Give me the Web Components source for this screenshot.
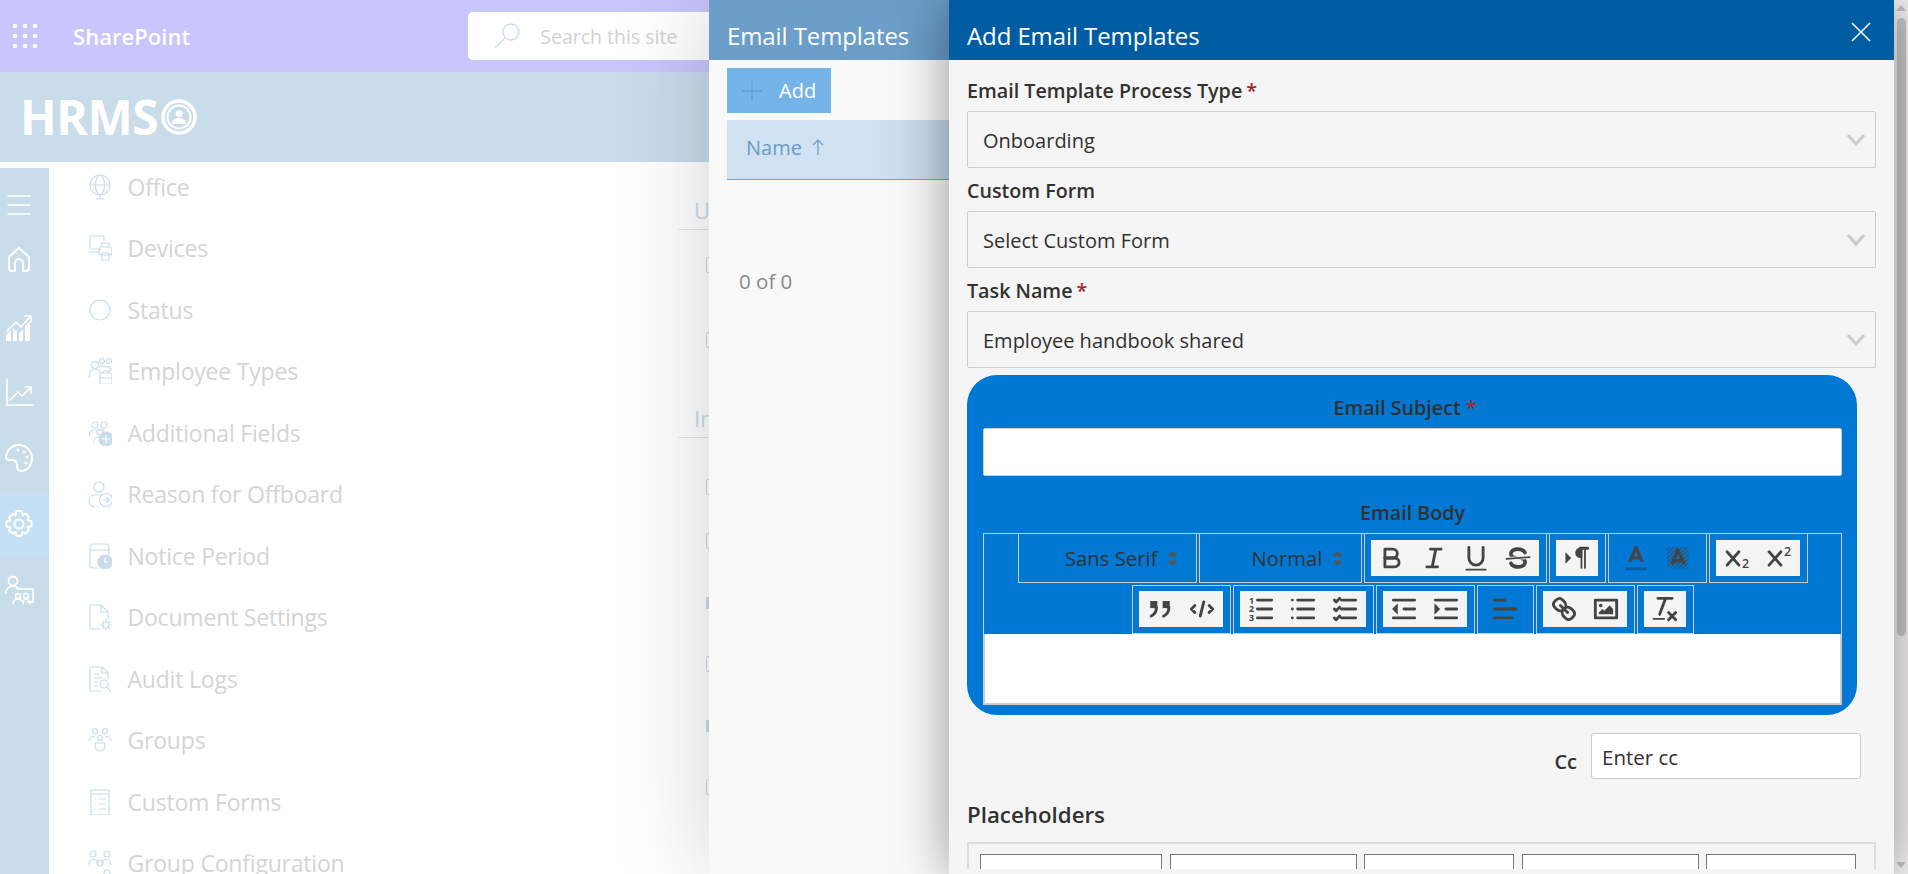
<!DOCTYPE html>
<html lang="en">
<head>
<meta charset="utf-8">
<title>Add Email Templates</title>
<style>
    html, body { margin: 0; height: 100%; overflow: hidden; background: #fff; }
    body { font-family: "Open Sans", "Liberation Sans", sans-serif; color: #333; }
</style>
</head>
<body>
<hrms-page></hrms-page>
<templates-panel>
    <add-template-panel>
        <form-select label="Email Template Process Type" value="Onboarding" required></form-select>
        <form-select label="Custom Form" value="Select Custom Form"></form-select>
        <form-select label="Task Name" value="Employee handbook shared" required></form-select>
        <email-box></email-box>
        <cc-row></cc-row>
        <placeholder-list></placeholder-list>
    </add-template-panel>
</templates-panel>

<script>
const line = 'fill="none" stroke="currentColor" stroke-linecap="round" stroke-linejoin="round"';

// left rail icons, 30 x 30
const railIcons = [
    `<path d="M4 6h22M4 15h22M4 24h22" ${line} stroke-width="1.4"/>`,
    `<path d="M5 13 15 4l10 9v11a3 3 0 0 1-3 3h-3V19a4 4 0 0 0-8 0v8H8a3 3 0 0 1-3-3z" ${line} stroke-width="2"/>`,
    `<path d="M3 18 12 9l5 5 9-10M21 3h6v6" ${line} stroke-width="1.6"/><path d="M2 28v-6l5-5v11zM9 28V15l4 4v9zM15 28v-8l4-3v11zM21 28V13l5-5v20z" fill="currentColor"/>`,
    `<path d="M3 2v26h26M6 23l8-8 4 4 9-9M21 10h6v6" ${line} stroke-width="1.7"/>`,
    `<path d="M15 2C7 2 2 8 2 15c1 3 3 2 6 2 4 0 5 2 5 5 0 3 0 6 4 6 7 0 11-6 11-13S22 2 15 2z" ${line} stroke-width="2"/><circle cx="14" cy="7" r="1.600" fill="currentColor"/><circle cx="20" cy="9" r="1.600" fill="currentColor"/><circle cx="23" cy="14" r="1.600" fill="currentColor"/><circle cx="22" cy="20" r="1.600" fill="currentColor"/>`,
    `<path d="M12.500 2h5l1 4 3-1.500 3.500 3.500-1.500 3 4 1v5l-4 1 1.500 3-3.500 3.500-3-1.500-1 4h-5l-1-4-3 1.500L5 21.500l1.500-3-4-1v-5l4-1L5 8.500 8.500 5l3 1.500z" ${line} stroke-width="2"/><circle cx="15" cy="15" r="4.500" ${line} stroke-width="2"/>`,
    `<circle cx="9" cy="6" r="4.500" ${line} stroke-width="1.800"/><path d="M2 18c0-4 3-7 7-7 3 0 4 1 6 3h14v13h-6M13 14h16" ${line} stroke-width="1.600"/><circle cx="14" cy="21" r="2.500" ${line} stroke-width="1.500"/><circle cx="22" cy="21" r="2.500" ${line} stroke-width="1.500"/><path d="M9 29c0-3 2-5 5-5s5 2 5 5c0-3 1-5 3-5s4 2 4 5" ${line} stroke-width="1.500"/>`
];
const railPads = ['8px 0 0', '0 0 14px', '0 0 6px', '0 0 7px', '0 0 5px', '0 0 3px', '0 0 2px'];

// settings menu, icons 24 x 26
const menuItems = [
    ['Office', `<circle cx="12" cy="11" r="10"/><ellipse cx="12" cy="11" rx="4.500" ry="10"/><path d="M2 11h20M12 21v4M8 25h8"/>`],
    ['Devices', `<path d="M13 14H4a2 2 0 0 1-2-2V3a2 2 0 0 1 2-2h10a2 2 0 0 1 2 2v3M1 17h11"/><rect x="11" y="12" width="13" height="8" rx="2"/><path d="M14 12V8h7v4M14 18h7v7h-7z"/>`],
    ['Status', `<circle cx="12" cy="13" r="10"/>`],
    ['Employee Types', `<circle cx="7" cy="7" r="3.500"/><circle cx="14" cy="3" r="2.500"/><circle cx="21" cy="3" r="2.500"/><path d="M1 20c0-5 2-9 6-9s5 2 5 4M11 9c2-1 5-1 7 0 2-1 5 0 5 4"/><rect x="12" y="15" width="12" height="11" rx="1"/><path d="M15 15v-2h6v2M12 20h12"/>`],
    ['Additional Fields', `<circle cx="7" cy="5" r="3"/><circle cx="16" cy="5" r="3"/><path d="M2 16c-2-3 1-6 4-6h11"/><circle cx="12" cy="12" r="3"/><path d="M6 22c0-3 2-5 5-5"/><circle cx="18" cy="19" r="7" fill="currentColor"/><path d="M18 15v8M14 19h8" stroke="#fff"/>`],
    ['Reason for Offboard', `<circle cx="11" cy="6" r="5"/><path d="M11 26H7c-3 0-6-2-6-6s3-6 6-6h7"/><circle cx="18" cy="19" r="6.500"/><path d="M15 19h6M18.500 16l3 3-3 3"/>`],
    ['Notice Period', `<path d="M11 25H5a3 3 0 0 1-3-3V4a3 3 0 0 1 3-3h13a3 3 0 0 1 3 3v8M2 7h19"/><circle cx="17" cy="19" r="7" fill="currentColor"/><path d="M17 15v4h3" stroke="#fff"/>`],
    ['Document Settings', `<path d="M12 25H2V1h11l7 7v7M13 1v7h7"/><circle cx="18" cy="21" r="3"/><path d="M18 15v2M18 25v2M12 21h2M22 21h2M14 17l1.500 1.500M20.500 23.500 22 25M14 25l1.500-1.500M20.500 18.500 22 17"/>`],
    ['Audit Logs', `<path d="M13 25H2V1h12l6 6v6M14 1v6h6M6 8h5M6 12h8M6 16h4M6 20h4"/><circle cx="16" cy="18" r="4"/><path d="M19 21l4 5"/>`],
    ['Groups', `<circle cx="7" cy="4" r="2.500"/><circle cx="17" cy="4" r="2.500"/><circle cx="12" cy="11" r="2.500"/><path d="M1 14c0-3 3-5 6-4M23 14c0-3-3-5-6-4M7 16h10v3a5 5 0 0 1-10 0z"/>`],
    ['Custom Forms', `<rect x="3" y="1" width="18" height="25"/><path d="M3 5h18M7 10h1M11 10h7M7 15h1M11 15h7M7 20h1M11 20h7"/>`],
    ['Group Configuration', `<circle cx="5" cy="4" r="3"/><circle cx="19" cy="4" r="3"/><circle cx="12" cy="13" r="3"/><circle cx="19" cy="23" r="3"/><path d="M1 15c0-4 1-6 4-6s4 2 6 4M23 15c0-4-1-6-4-6s-4 2-6 4"/>`]
];

class HrmsPage extends HTMLElement {
    constructor() {
        super();
        this.attachShadow({ mode: "open" });
        const rail = railIcons.map((icon, i) => `
            <div class="rail-item ${i === 5 ? 'on' : ''}" style="padding:${railPads[i]}">
                <svg width="30" height="30" viewBox="0 0 30 30">${icon}</svg>
            </div>`).join('');
        const menu = menuItems.map(([name, icon]) => `
            <div class="menu-item">
                <svg width="24" height="26" viewBox="0 0 24 26" fill="none" stroke="currentColor" stroke-width="1.2">${icon}</svg>
                <span>${name}</span>
            </div>`).join('');
        const ticks = list => list.map(([m, kind]) => `<div class="tick ${kind}" style="margin-top:${m}px"></div>`).join('');
        this.shadowRoot.innerHTML = `
            <style>
                :host { display: flex; flex-direction: column; height: 874px; overflow: hidden; }
                /* Suite bar */
                .suite { height: 72px; flex: none; background: #c8c6fc; display: flex; align-items: center; color: #fff; }
                .waffle { margin-left: 12px; width: 26px; height: 26px; }
                .brand { margin-left: 35px; font-size: 22px; font-weight: 600; letter-spacing: .05px; }
                .search { margin-left: 278px; width: 300px; height: 48px; background: #fff; border-radius: 5px; display: flex; align-items: center; color: #d2d2d2; font-size: 19.500px; }
                .search svg { margin: 0 20px 0 26px; color: #c9dcea; }
                /* Site header */
                .site { height: 90px; flex: none; background: #c9dcea; display: flex; align-items: center; color: #fff; padding-left: 20px; }
                .site b { font-size: 48px; font-weight: 700; letter-spacing: -.5px; line-height: 1; }
                .site svg { margin-left: 3px; }
                /* Body */
                .body { flex: 1; display: flex; min-height: 0; }
                .rail { width: 49px; flex: none; background: #c9dcea; margin-top: 6px; color: #fff; display: flex; flex-direction: column; }
                .rail-item { height: 65px; box-sizing: border-box; display: flex; align-items: center; padding-left: 4px !important; }
                .rail-item.on { background: #c5e0f5; }
                .menu { width: 629px; flex: none; padding-left: 39px; box-sizing: border-box; overflow: hidden; }
                .menu-inner { margin-top: -6px; }
                .menu-item { height: 61.500px; display: flex; align-items: center; gap: 15.500px; font-size: 23px; color: #d4d4d4; letter-spacing: -.2px; white-space: nowrap; }
                .menu-item svg { color: #c9dcea; flex: none; }
                .cols { flex: 1; color: #c9dcea; }
                .cols h4 { margin: 0; font-weight: 400; font-size: 22px; padding-left: 16px; height: 32px; line-height: 26px; border-bottom: 1px solid #e8e8e8; }
                .cols .tick { width: 12px; height: 16px; margin-left: 28px; box-sizing: border-box; }
                .tick.line { border: 1.500px solid #c9dcea; border-radius: 2px; }
                .tick.solid { background: #c9dcea; height: 12px; }
            </style>
            <div class="suite">
                <svg class="waffle" viewBox="0 0 26 26" fill="currentColor">
                    <circle cx="3" cy="3" r="2.300"/><circle cx="13" cy="3" r="2.300"/><circle cx="23" cy="3" r="2.300"/>
                    <circle cx="3" cy="13" r="2.300"/><circle cx="13" cy="13" r="2.300"/><circle cx="23" cy="13" r="2.300"/>
                    <circle cx="3" cy="23" r="2.300"/><circle cx="13" cy="23" r="2.300"/><circle cx="23" cy="23" r="2.300"/>
                </svg>
                <span class="brand">SharePoint</span>
                <div class="search">
                    <svg width="26" height="26" viewBox="0 0 26 26" fill="none" stroke="currentColor" stroke-width="1.300"><circle cx="17" cy="9" r="8"/><path d="M11 15 1 25"/></svg>
                    <span>Search this site</span>
                </div>
            </div>
            <div class="site">
                <b>HRMS</b>
                <svg width="36" height="36" viewBox="0 0 36 36" fill="none" stroke="currentColor">
                    <circle cx="18" cy="18" r="16" stroke-width="3.500"/><circle cx="18" cy="18" r="11.500" stroke-width="2"/>
                    <circle cx="18" cy="14.500" r="3.500" fill="currentColor" stroke="none"/><path d="M11 25c0-4 3-6 7-6s7 2 7 6z" fill="currentColor" stroke="none"/>
                </svg>
            </div>
            <div class="body">
                <div class="rail">${rail}</div>
                <div class="menu"><div class="menu-inner">${menu}</div></div>
                <div class="cols">
                    <h4 style="margin-top:35px">U</h4>
                    ${ticks([[27, 'line'], [59, 'line']])}
                    <h4 style="margin-top:57px">In</h4>
                    ${ticks([[41, 'line'], [38, 'line'], [48, 'solid'], [47, 'line'], [48, 'solid'], [47, 'line']])}
                </div>
            </div>
        `;
    }
}

class TemplatesPanel extends HTMLElement {
    constructor() {
        super();
        this.attachShadow({ mode: "open" });
        this.shadowRoot.innerHTML = `
            <style>
                /* flyout lying over the page */
                :host { position: absolute; left: 709px; top: 0; right: 0; bottom: 0; display: flex; background: #f9f9f9; box-shadow: 0 0 90px rgba(0,0,0,.18); }
                .list { width: 240px; flex: none; display: flex; flex-direction: column; }
                .head { height: 60px; box-sizing: border-box; flex: none; background: #6b9ec8; color: #fff; font-size: 24px; padding: 10px 0 0 18px; display: flex; align-items: center; letter-spacing: -.1px; }
                .add { margin: 8px 0 0 18px; width: 104px; height: 45px; background: #75b4e9; color: #fff; display: flex; align-items: center; font-size: 20px; }
                .add svg { margin: 0 17px 0 15px; color: #5a9fd6; }
                .th { margin: 7px 0 0 18px; height: 60px; box-sizing: border-box; padding: 0 0 5px 19px; background: linear-gradient(90deg, #d1e3f3 60%, #c6d9e9); border-bottom: 1px solid #6aa5db; color: #6a9cc6; display: flex; align-items: center; font-size: 20px; font-weight: 500; }
                .th svg { margin-left: 10px; }
                .count { margin: 87px 0 0 30px; color: #8a8a8a; font-size: 20.500px; }
                .bar { width: 14px; flex: none; margin-left: auto; background: #f3f1f1; display: flex; flex-direction: column; align-items: center; }
                .bar i { display: block; width: 0; height: 0; border: 5px solid transparent; }
                .up { border-bottom: 6px solid #c4c4c4 !important; border-top: 0 !important; margin-top: 5px; }
                .thumb { width: 9px; flex: none; height: 618px; margin-top: 7px; background: #c8c8c8; border-radius: 5px; }
                .down { border-top: 6px solid #c4c4c4 !important; border-bottom: 0 !important; margin-top: auto; margin-bottom: 6px; }
            </style>
            <div class="list">
                <div class="head">Email Templates</div>
                <div class="add">
                    <svg width="20" height="20" viewBox="0 0 20 20" stroke="currentColor" stroke-width="1.300"><path d="M10 0v20M0 10h20"/></svg>
                    <span>Add</span>
                </div>
                <div class="th">Name
                    <svg width="12" height="16" viewBox="0 0 12 16" fill="none" stroke="currentColor" stroke-width="1.200"><path d="M6 16V1M1 6l5-5 5 5"/></svg>
                </div>
                <div class="count">0 of 0</div>
            </div>
            <slot></slot>
            <div class="bar"><i class="up"></i><div class="thumb"></div><i class="down"></i></div>
        `;
    }
}

class AddTemplatePanel extends HTMLElement {
    constructor() {
        super();
        this.attachShadow({ mode: "open" });
        this.shadowRoot.innerHTML = `
            <style>
                :host { flex: 1; min-width: 0; display: flex; flex-direction: column; background: #f5f5f5; box-shadow: 0 0 50px rgba(0,0,0,.4); position: relative; }
                .head { height: 60px; box-sizing: border-box; flex: none; background: #005da4; color: #fff; display: flex; align-items: center; justify-content: space-between; padding: 0 23px 0 18px; }
                .head span { font-size: 24px; letter-spacing: -.1px; margin-top: 10px; }
                .head svg { margin-top: 4px; }
                .body { flex: 1; min-height: 0; margin-bottom: 5px; overflow: hidden; padding: 8px 18px 0 18px; }
            </style>
            <div class="head">
                <span>Add Email Templates</span>
                <svg width="20" height="20" viewBox="0 0 20 20" stroke="#fff" stroke-width="1.500"><path d="M1 1l18 18M19 1 1 19"/></svg>
            </div>
            <div class="body"><slot></slot></div>
        `;
    }
}

class FormSelect extends HTMLElement {
    constructor() {
        super();
        this.attachShadow({ mode: "open" });
        const label = this.getAttribute('label') || '';
        const value = this.getAttribute('value') || '';
        const star = this.hasAttribute('required') ? '<em>*</em>' : '';
        this.shadowRoot.innerHTML = `
            <style>
                :host { display: block; }
                label { display: block; height: 43px; line-height: 46px; font-size: 19.700px; font-weight: 600; color: #323130; }
                em { font-style: normal; color: #a4262c; margin-left: 4px; }
                .box { height: 57px; box-sizing: border-box; border: 1px solid #ccc; border-radius: 2px; display: flex; align-items: center; justify-content: space-between; padding: 1px 9px 0 15px; font-size: 20px; color: #323130; }
                .box svg { color: #ccc; }
            </style>
            <label>${label}${star}</label>
            <div class="box">
                <span>${value}</span>
                <svg width="20" height="14" viewBox="0 0 20 14" fill="none" stroke="currentColor" stroke-width="3.200"><path d="M2 2l8 9 8-9"/></svg>
            </div>
        `;
    }
}

// quill toolbar glyphs, viewBox 0 0 18 18
const qlStroke = 'fill="none" stroke="#444" stroke-width="1.600" stroke-linecap="round" stroke-linejoin="round"';
const qlFill = 'fill="#444"';
const qlIcons = {
    bold: `<path ${qlStroke} d="M5,4H9.500A2.500,2.500,0,0,1,12,6.500v0A2.500,2.500,0,0,1,9.500,9H5V4Z"/><path ${qlStroke} d="M5,9h5.500A2.500,2.500,0,0,1,13,11.500v0A2.500,2.500,0,0,1,10.500,14H5V9Z"/>`,
    italic: `<path ${qlStroke} d="M7 4h6M5 14h6M8 14l2-10"/>`,
    underline: `<path ${qlStroke} d="M5,3V9a4,4,0,0,0,4,4h0a4,4,0,0,0,4-4V3"/><rect ${qlFill} x="3" y="15" width="12" height="1" rx=".5"/>`,
    strike: `<path fill="none" stroke="#444" stroke-width="1" stroke-linecap="round" d="M15.500 8.500l-13 1"/><path ${qlFill} d="M9.007,8C6.542,7.791,6,7.519,6,6.500,6,5.792,7.283,5,9,5c1.571,0,2.765.679,2.969,1.309a1,1,0,0,0,1.900-.617C13.356,4.106,11.354,3,9,3,6.200,3,4,4.538,4,6.500a3.200,3.200,0,0,0,.5,1.843Z"/><path ${qlFill} d="M8.984,10C11.457,10.208,12,10.479,12,11.500c0,.708-1.283,1.500-3,1.500-1.571,0-2.765-.679-2.969-1.309a1,1,0,1,0-1.900.617C4.644,13.894,6.646,15,9,15c2.800,0,5-1.538,5-3.500a3.200,3.200,0,0,0-.5-1.843Z"/>`,
    direction: `<polygon ${qlFill} stroke="#444" points="3 11 5 9 3 7 3 11"/><path ${qlFill} d="M11,3a3,3,0,0,0,0,6h1V3H11Z"/><rect ${qlFill} x="11" y="4" width="1" height="11"/><rect ${qlFill} x="13" y="4" width="1" height="11"/><path ${qlStroke} d="M15 3.500h-4"/>`,
    color: `<path fill="none" stroke="#0b5e9e" stroke-width="1.600" d="M3 15h12"/><path fill="none" stroke="#444" stroke-width="1.800" stroke-linejoin="round" d="M5.500 11 9 3l3.500 8M11.630 9H6.380"/>`,
    background: `<defs><pattern id="hatch" width="2.400" height="2.400" patternUnits="userSpaceOnUse"><path d="M0 2.400 2.400 0" stroke="#444" stroke-width=".55"/></pattern></defs><rect x="3" y="3" width="12" height="12" fill="url(#hatch)"/><path fill="none" stroke="#444" stroke-width="1.800" stroke-linejoin="round" d="M5.500 12.500 9 4.500l3.500 8M11.630 10.500H6.380"/>`,
    sub: `<path ${qlStroke} stroke-width="2.100" d="M3.400 5.500l6.700 7.500M10.100 5.500 3.400 13"/><text x="11.800" y="14.700" font-size="7" font-family="Open Sans" font-weight="600" fill="#444">2</text>`,
    sup: `<path ${qlStroke} stroke-width="2.100" d="M3.400 5.500l6.700 7.500M10.100 5.500 3.400 13"/><text x="11.800" y="8" font-size="7" font-family="Open Sans" font-weight="600" fill="#444">2</text>`,
    blockquote: `<rect ${qlFill} stroke="#444" x="4" y="5" width="3" height="3"/><rect ${qlFill} stroke="#444" x="11" y="5" width="3" height="3"/><path ${qlStroke} d="M7,8c0,4.031-3,5-3,5M14,8c0,4.031-3,5-3,5"/>`,
    code: `<path ${qlStroke} d="M5 7 3 9l2 2M13 7l2 2-2 2M10 5 8 13"/>`,
    ordered: `<path ${qlStroke} d="M7 4h8M7 9h8M7 14h8"/><text x="2.300" y="6" font-size="5" font-family="Open Sans" font-weight="700" fill="#444">1</text><text x="2.300" y="10.800" font-size="5" font-family="Open Sans" font-weight="700" fill="#444">2</text><text x="2.300" y="15.800" font-size="5" font-family="Open Sans" font-weight="700" fill="#444">3</text>`,
    bullet: `<path ${qlStroke} d="M6 4h9M6 9h9M6 14h9M3 4h0M3 9h0M3 14h0"/>`,
    check: `<path ${qlStroke} d="M7 4h8M7 9h8M7 14h8M3 4l1 1 2-2M3 9l1 1 2-2M3 14l1 1 2-2"/>`,
    outdent: `<path ${qlStroke} d="M3 14h12M3 4h12M9 9h6"/><polygon ${qlFill} stroke="#444" points="5 7 5 11 3 9 5 7"/>`,
    indent: `<path ${qlStroke} d="M3 14h12M3 4h12M9 9h6"/><polygon ${qlFill} stroke="#444" points="3 7 3 11 5 9 3 7"/>`,
    align: `<path ${qlStroke} d="M3 9h12M3 14h10M3 4h6"/>`,
    link: `<path ${qlStroke} d="M7 7l4 4M8.900,4.577a3.476,3.476,0,0,1,.36,4.679A3.476,3.476,0,0,1,4.577,8.900C3.185,7.500,2.035,6.400,4.217,4.217S7.500,3.185,8.900,4.577ZM13.423,9.100a3.476,3.476,0,0,0-4.679-.36,3.476,3.476,0,0,0,.36,4.679c1.392,1.392,2.500,2.542,4.679.36S14.815,10.500,13.423,9.100Z"/>`,
    image: `<rect ${qlStroke} x="3" y="4" width="12" height="10"/><circle ${qlFill} cx="6" cy="7" r="1"/><polygon ${qlFill} points="5 12 5 11 7 9 8 10 11 7 13 9 13 12 5 12"/>`,
    clean: `<path ${qlStroke} d="M5 3h8M6 12 9.350 3M11 11l4 4M15 11l-4 4"/><rect ${qlFill} x="2" y="14" width="7" height="1" rx=".5"/>`
};

class RichToolbar extends HTMLElement {
    constructor() {
        super();
        this.attachShadow({ mode: "open" });
        const group = (names, bare) => `
            <div class="group ${bare ? 'bare' : ''}">${names.map(n => `
                <div class="btn"><svg width="32" height="32" viewBox="0 0 18 18">${qlIcons[n]}</svg></div>`).join('')}
            </div>`;
        const picker = (text, width) => `
            <div class="picker" style="width:${width}px">
                <span>${text}</span>
                <svg width="27" height="27" viewBox="0 0 18 18" fill="#555" stroke="#555" stroke-width="1.500" stroke-linejoin="round"><polygon points="7 11 9 13 11 11 7 11"/><polygon points="7 7 9 5 11 7 7 7"/></svg>
            </div>`;
        this.shadowRoot.innerHTML = `
            <style>
                :host { display: block; border-top: 1px solid #ccc; border-left: 1px solid #ccc; border-right: 1px solid #ccc; height: 100px; }
                .row { display: flex; justify-content: center; gap: 2px; height: 49px; }
                .row + .row { margin-top: 2px; }
                .group, .picker { box-sizing: border-box; height: 49px; border: 1px solid #ccc; border-top: 0; }
                .group { display: flex; padding: 6px 6.500px 0; }
                .row + .row .group { border-top: 1px solid #ccc; padding-top: 5px; }
                .btn { width: 42px; height: 36px; background: #f4f4f4; display: flex; align-items: center; justify-content: center; }
                .bare .btn { background: none; }
                .picker { display: flex; align-items: center; justify-content: flex-end; padding-right: 10px; font-size: 20.300px; font-weight: 400; color: #333; }
                .picker svg { margin-left: 1px; }
            </style>
            <div class="row">
                ${picker('Sans Serif', 179)}${picker('Normal', 163)}
                ${group(['bold', 'italic', 'underline', 'strike'])}
                ${group(['direction'])}
                ${group(['color', 'background'], true)}
                ${group(['sub', 'sup'])}
            </div>
            <div class="row">
                ${group(['blockquote', 'code'])}
                ${group(['ordered', 'bullet', 'check'])}
                ${group(['outdent', 'indent'])}
                ${group(['align'], true)}
                ${group(['link', 'image'])}
                ${group(['clean'])}
            </div>
        `;
    }
}

class EmailBox extends HTMLElement {
    constructor() {
        super();
        this.attachShadow({ mode: "open" });
        this.shadowRoot.innerHTML = `
            <style>
                :host { display: block; margin: 7px 19px 0 0; height: 340px; box-sizing: border-box; background: #0078d4; border-radius: 30px; padding: 20px 15px 10px 16px; }
                .cap { text-align: center; font-size: 19.700px; font-weight: 600; color: #323130; line-height: 26px; height: 26px; }
                .cap.subj { padding-right: 15px; }
                em { font-style: normal; color: #a4262c; margin-left: 5px; }
                .subject { margin: 7px 0 24px; height: 48px; box-sizing: border-box; background: #fff; border: 1px solid #ccc; border-radius: 2px; }
                rich-toolbar { margin-top: 7px; }
                .editor { height: 71px; box-sizing: border-box; background: #fff; border: 2px solid #ccc; border-top: 0; }
            </style>
            <div class="cap subj">Email Subject<em>*</em></div>
            <div class="subject"></div>
            <div class="cap">Email Body</div>
            <rich-toolbar></rich-toolbar>
            <div class="editor"></div>
        `;
    }
}

class CcRow extends HTMLElement {
    constructor() {
        super();
        this.attachShadow({ mode: "open" });
        this.shadowRoot.innerHTML = `
            <style>
                :host { display: flex; justify-content: flex-end; margin: 18px 15px 0 0; }
                label { font-size: 20px; font-weight: 600; color: #323130; margin: 16px 14px 0 0; line-height: 26px; }
                .input { width: 270px; height: 46px; box-sizing: border-box; background: #fff; border: 1px solid #ccc; border-radius: 3px; padding: 0 10px; font-size: 20.500px; line-height: 47px; color: #323130; }
            </style>
            <label>Cc</label>
            <div class="input">Enter cc</div>
        `;
    }
}

class PlaceholderList extends HTMLElement {
    constructor() {
        super();
        this.attachShadow({ mode: "open" });
        const chips = [['Employee Name', 182], ['Employee Code', 187], ['Department', 150], ['Date of Joining', 177], ['Designation', 150]];
        this.shadowRoot.innerHTML = `
            <style>
                :host { display: block; margin-top: 22px; }
                h3 { margin: 0; font-size: 22.300px; font-weight: 600; line-height: 28px; color: #323130; }
                .box { margin: 13px 0 0; border: 2px solid #dcdcdc; border-bottom: 0; padding: 10px 18px 0 11px; display: flex; gap: 7.500px; height: 60px; box-sizing: border-box; }
                .chip { height: 50px; box-sizing: border-box; background: #fff; border: 1px solid #777; font-size: 20px; line-height: 27px; text-align: center; padding-top: 8px; color: #323130; flex: none; }
            </style>
            <h3>Placeholders</h3>
            <div class="box">
                ${chips.map(([t, w]) => `<div class="chip" style="width:${w}px">${t}</div>`).join('')}
            </div>
        `;
    }
}

customElements.define('hrms-page', HrmsPage);
customElements.define('templates-panel', TemplatesPanel);
customElements.define('add-template-panel', AddTemplatePanel);
customElements.define('form-select', FormSelect);
customElements.define('rich-toolbar', RichToolbar);
customElements.define('email-box', EmailBox);
customElements.define('cc-row', CcRow);
customElements.define('placeholder-list', PlaceholderList);
</script>
</body>
</html>
